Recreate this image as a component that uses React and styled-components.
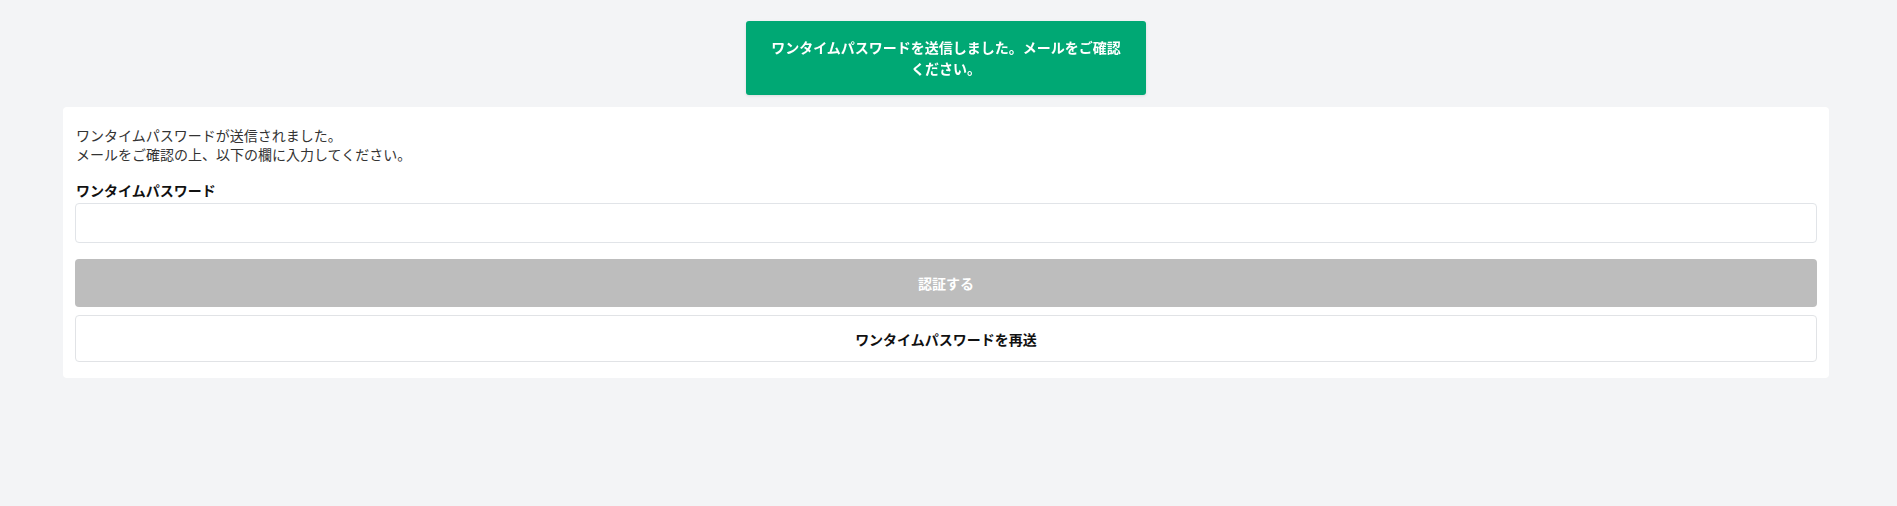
import React from 'react'
import styled, { createGlobalStyle } from 'styled-components'

const GlobalStyle = createGlobalStyle`
  * { box-sizing: border-box; }
  body {
    margin: 0;
    background: #f3f4f6;
    font-family: "Noto Sans", "Noto Sans CJK JP", sans-serif;
    color: #333;
  }
`

export default function App() {
  return (
    <>
      <GlobalStyle />
      <Page>
        <Toast role="status">
          ワンタイムパスワードを送信しました。メールをご確認ください。
        </Toast>
        <Card>
          <Message>
            ワンタイムパスワードが送信されました。
            <br />
            メールをご確認の上、以下の欄に入力してください。
          </Message>
          <Field>
            <Label htmlFor="otp">ワンタイムパスワード</Label>
            <Input id="otp" type="text" />
          </Field>
          <Actions>
            <Button $variant="primary" disabled>認証する</Button>
            <Button $variant="outline">ワンタイムパスワードを再送</Button>
          </Actions>
        </Card>
      </Page>
    </>
  )
}

const Page = styled.div`
  min-height: 506px;
  padding: 107px 68px 0 63px;
`

// toast floats over the page, centred on the card column
const Toast = styled.div`
  position: fixed;
  top: 21px;
  left: calc(50% - 2.5px);
  transform: translateX(-50%);
  width: 400px;
  padding: 16px 24px;
  background: #00a874;
  color: #fff;
  border-radius: 3px;
  font-size: 14px;
  font-weight: 700;
  line-height: 21px;
  text-align: center;
  box-shadow: 0 1px 3px rgba(0, 0, 0, 0.1);
`

const Card = styled.div`
  background: #fff;
  border-radius: 4px;
  padding: 19px 12px 16px 12px;
`

const Message = styled.p`
  margin: 0 1px;
  font-size: 14px;
  line-height: 19px;
  color: #333;
`

const Field = styled.div`
  display: flex;
  flex-direction: column;
  gap: 3px;
  margin-top: 17px;
`

const Label = styled.label`
  margin-left: 1px;
  font-size: 14px;
  font-weight: 700;
  line-height: 19px;
  color: #111;
`

const Input = styled.input`
  height: 40px;
  border: 1px solid #e1e4e8;
  border-radius: 4px;
  padding: 0 12px;
  font-size: 14px;
  outline: none;
`

const Actions = styled.div`
  display: flex;
  flex-direction: column;
  gap: 8px;
  margin-top: 16px;
`

const Button = styled.button`
  height: ${p => (p.$variant === 'primary' ? '48px' : '47px')};
  border-radius: 4px;
  font-family: inherit;
  font-size: 14px;
  font-weight: 700;
  cursor: pointer;
  border: ${p => (p.$variant === 'primary' ? 'none' : '1px solid #e1e3e6')};
  background: ${p => (p.$variant === 'primary' ? '#bdbdbd' : '#fff')};
  color: ${p => (p.$variant === 'primary' ? '#fff' : '#111')};
  &:disabled { cursor: default; }
`
